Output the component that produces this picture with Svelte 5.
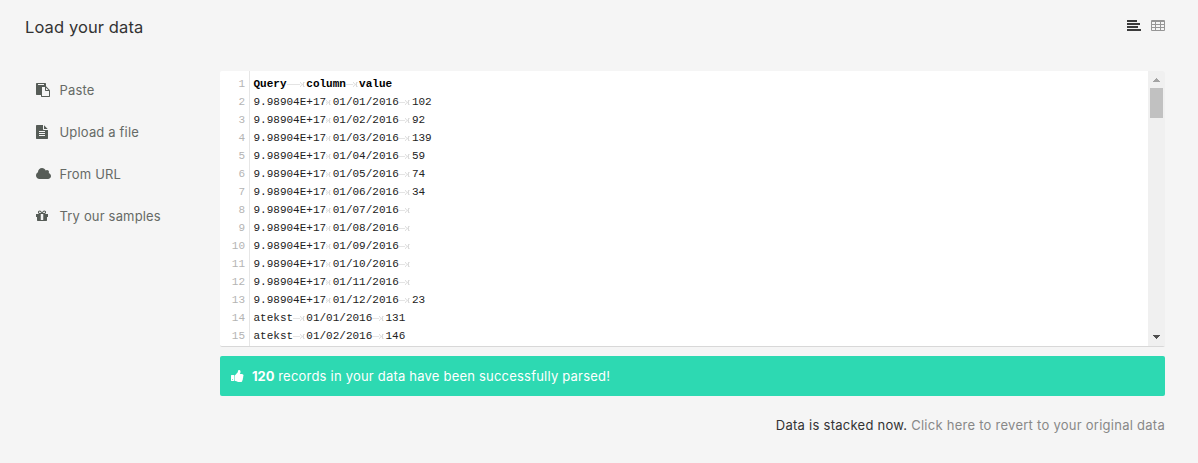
<script>
  const menu = [
    { label: 'Paste', icon: 'paste' },
    { label: 'Upload a file', icon: 'file' },
    { label: 'From URL', icon: 'cloud' },
    { label: 'Try our samples', icon: 'gift' }
  ];

  const source = [
    'Query\tcolumn\tvalue',
    '9.98904E+17\t01/01/2016\t102',
    '9.98904E+17\t01/02/2016\t92',
    '9.98904E+17\t01/03/2016\t139',
    '9.98904E+17\t01/04/2016\t59',
    '9.98904E+17\t01/05/2016\t74',
    '9.98904E+17\t01/06/2016\t34',
    '9.98904E+17\t01/07/2016\t',
    '9.98904E+17\t01/08/2016\t',
    '9.98904E+17\t01/09/2016\t',
    '9.98904E+17\t01/10/2016\t',
    '9.98904E+17\t01/11/2016\t',
    '9.98904E+17\t01/12/2016\t23',
    'atekst\t01/01/2016\t131',
    'atekst\t01/02/2016\t146'
  ];

  // Split a line into cells, each followed by the columns its tab spans.
  function cells(line) {
    let col = 0;
    const parts = line.split('\t');
    return parts.map((text, i) => {
      col += text.length;
      const tab = i < parts.length - 1 ? 4 - (col % 4) : 0;
      col += tab;
      return { text, tab };
    });
  }
  const lines = source.map(cells);
</script>

<main>
  <header>
    <h1>Load your data</h1>
    <div class="views">
      <svg width="14" height="11" viewBox="0 0 14 11" fill="#3b3b3b">
        <path d="M0 0h10v2H0zM0 3h13v2H0zM0 6h11v2H0zM0 9h14v2H0z" />
      </svg>
      <svg width="14" height="12" viewBox="0 0 14 12">
        <path fill="#969696" fill-rule="evenodd" d="M1 0h12q1 0 1 1v9q0 1-1 1H1q-1 0-1-1V1q0-1 1-1zM1 2v2h3V2zM5 2v2h4V2zM10 2v2h3V2zM1 5v2h3V5zM5 5v2h4V5zM10 5v2h3V5zM1 8v2h3V8zM5 8v2h4V8zM10 8v2h3V8z" />
      </svg>
    </div>
  </header>

  <div class="columns">
    <nav>
      {#each menu as item}
        <a class={item.icon}>
          {#if item.icon === 'paste'}
            <svg width="14" height="14" viewBox="0 0 1792 1792"><path d="M768 1664h896v-640h-416q-40 0-68-28t-28-68v-416h-384v1152zm256-1440v-64q0-13-9.500-22.500t-22.500-9.500h-704q-13 0-22.500 9.500t-9.500 22.500v64q0 13 9.500 22.500t22.500 9.500h704q13 0 22.500-9.500t9.500-22.500zm256 672h299l-299-299v299zm512 128v672q0 40-28 68t-68 28h-960q-40 0-68-28t-28-68v-160h-544q-40 0-68-28t-28-68v-1344q0-40 28-68t68-28h1088q40 0 68 28t28 68v328q21 13 36 28l408 408q28 28 48 76t20 88z" /></svg>
          {:else if item.icon === 'file'}
            <svg width="12" height="14" viewBox="128 0 1536 1792"><path d="M1596 476q14 14 28 36h-472v-472q22 14 36 28zm-476 164h544v1056q0 40-28 68t-68 28h-1344q-40 0-68-28t-28-68v-1600q0-40 28-68t68-28h800v544q0 40 28 68t68 28zm160 736v-64q0-14-9-23t-23-9h-704q-14 0-23 9t-9 23v64q0 14 9 23t23 9h704q14 0 23-9t9-23zm0-256v-64q0-14-9-23t-23-9h-704q-14 0-23 9t-9 23v64q0 14 9 23t23 9h704q14 0 23-9t9-23zm0-256v-64q0-14-9-23t-23-9h-704q-14 0-23 9t-9 23v64q0 14 9 23t23 9h704q14 0 23-9t9-23z" /></svg>
          {:else if item.icon === 'cloud'}
            <svg width="15" height="14" viewBox="64 0 1920 1792"><path d="M1984 1152q0 159-112.500 271.500t-271.500 112.500h-1088q-185 0-316.500-131.500t-131.500-316.500q0-132 71-241.500t187-163.500q-2-28-2-43 0-212 150-362t362-150q158 0 286.500 88t187.500 230q70-62 166-62 106 0 181 75t75 181q0 75-41 138 129 30 213 134.500t84 239.500z" /></svg>
          {:else}
            <svg width="12" height="14" viewBox="128 0 1536 1792"><path d="M1056 1356v-716h-320v716q0 25 18 38.500t46 13.500h192q28 0 46-13.500t18-38.500zm-456-844h195l-126-161q-26-31-69-31-40 0-68 28t-28 68 28 68 68 28zm688-96q0-40-28-68t-68-28q-43 0-69 31l-125 161h194q40 0 68-28t28-68zm376 256v320q0 14-9 23t-23 9h-96v416q0 40-28 68t-68 28h-1088q-40 0-68-28t-28-68v-416h-96q-14 0-23-9t-9-23v-320q0-14 9-23t23-9h440q-93 0-158.500-65.500t-65.500-158.500 65.500-158.500 158.500-65.500q107 0 168 77l128 165 128-165q61-77 168-77 93 0 158.500 65.500t65.500 158.500-65.500 158.500-158.500 65.500h440q14 0 23 9t9 23z" /></svg>
          {/if}
          <span>{item.label}</span>
        </a>
      {/each}
    </nav>

    <section>
      <div class="editor">
        <div class="gutter">
          {#each lines as _, i}<div>{i + 1}</div>{/each}
        </div>
        <div class="code">
          {#each lines as line, i}
            <div class="line" class:head={i === 0}>
              {#each line as cell}<span>{cell.text}</span>{#if cell.tab}<i class="tab" style="width: {cell.tab * 6.6}px"><svg width="5" height="5" viewBox="0 0 5 5"><path d="M0 0l2 2.500L0 5M4.500 0L2.500 2.500l2 2.500M3.500 0v5" /></svg></i>{/if}{/each}
            </div>
          {/each}
        </div>
        <div class="scroll">
          <svg width="7" height="4" viewBox="0 0 7 4" fill="#a3a3a3" shape-rendering="crispEdges"><path d="M3 0h1v1h1v1h1v1h1v1H0V3h1V2h1V1h1z" /></svg>
          <div class="thumb"></div>
          <svg class="down" width="7" height="4" viewBox="0 0 7 4" fill="#505050" shape-rendering="crispEdges"><path d="M0 0h7v1H6v1H5v1H4v1H3V3H2V2H1V1H0z" /></svg>
        </div>
      </div>

      <div class="success">
        <svg width="14" height="14" viewBox="64 0 1792 1792"><path d="M320 1344q0-26-19-45t-45-19q-27 0-45.500 19t-18.500 45q0 27 18.500 45.500t45.500 18.500q26 0 45-18.500t19-45.500zm160-512v640q0 26-19 45t-45 19h-288q-26 0-45-19t-19-45v-640q0-26 19-45t45-19h288q26 0 45 19t19 45zm1184 0q0 86-55 149 15 44 15 76 3 76-43 137 17 56 0 117-15 57-54 94 9 112-49 181-64 76-197 78h-129q-66 0-144-15.500t-121.500-29-120.500-39.500q-123-43-158-44-26-1-45-19.500t-19-44.500v-641q0-25 18-43.500t43-20.500q24-2 76-59t101-121q68-87 101-120 18-18 31-48t17.500-48.500 13.500-60.500q7-39 12.500-61t19.500-52 34-50q19-19 45-19 46 0 82.500 10.500t60 26 40 40.500 24 45 12 50 5 45 .5 39q0 38-9.500 76t-19 60-27.500 56q-3 6-10 18t-11 22-8 24h277q78 0 135 57t57 135z" /></svg>
        <span class="text"><b>120</b> <span class="msg">records in your data have been successfully parsed!</span></span>
      </div>

      <p><span class="now">Data is stacked now.</span> <a class="revert">Click here to revert to your original data</a></p>
    </section>
  </div>
</main>

<style>
  :global(body) { margin: 0; background: #f5f5f5; }
  main {
    box-sizing: border-box;
    height: 463px;
    padding: 0 33px 0 25px;
    overflow: hidden;
    background: #f5f5f5;
    font-family: Inter, sans-serif;
    font-size: 13px;
    color: #333;
  }
  header { display: flex; justify-content: space-between; height: 71px; }
  h1 { margin: 16px 0 0; font-size: 16.500px; line-height: 22px; font-weight: 400; letter-spacing: .1px; color: #333; }
  .views { display: flex; gap: 10.500px; padding-top: 20px; }
  .columns { display: flex; }
  nav { width: 184px; padding: 0 0 0 11px; flex: none; }
  nav a { display: flex; align-items: center; width: 148px; height: 42px; color: #666a66; letter-spacing: .17px; }
  nav a:first-child { margin-top: -2px; }
  nav svg { fill: #565c57; flex: none; margin-right: auto; }
  nav span { width: 124.500px; white-space: nowrap; }
  section { width: 945px; flex: none; }
  .editor {
    display: flex;
    height: 275px;
    overflow: hidden;
    background: #fff;
    border-bottom: 1px solid #d8d8d8;
    border-radius: 2px;
    font: 11px/18px "Liberation Mono", monospace;
    color: #222;
  }
  .gutter { width: 25px; padding: 4px 4px 0 0; border-right: 1px solid #e6e6e6; text-align: right; color: #b4b4b4; height: 290px; }
  .code { flex: 1; padding: 4px 0 0 3.500px; }
  .line { display: flex; height: 18px; white-space: pre; }
  .head { font-weight: 700; color: #000; }
  .tab { display: flex; align-items: center; justify-content: flex-end; height: 18px; padding-right: 1.500px; box-sizing: border-box; }
  .tab::before { content: ''; flex: 1; height: 1px; background: #e4e4e4; }
  .tab svg { fill: none; stroke: #d8d8d8; stroke-width: .9; flex: none; }
  .scroll { width: 17px; background: #f0f0f0; display: flex; flex-direction: column; align-items: center; padding-top: 7px; box-sizing: border-box; }
  .thumb { width: 13px; height: 30px; background: #c1c1c1; margin-top: 6px; }
  .down { margin-top: auto; margin-bottom: 7px; }
  .success { display: flex; align-items: center; box-sizing: border-box; height: 40px; margin-top: 9px; padding: 0 11px; background: #2dd9b2; border-radius: 2px; color: #fff; }
  .success svg { fill: #fff; margin-right: 7px; }
  .text { padding-bottom: 1px; }
  .success b { font-weight: 700; }
  .msg { letter-spacing: .21px; }
  p { margin: 20px 0 0; line-height: 18px; text-align: right; white-space: nowrap; letter-spacing: .26px; color: #333; }
  .revert { color: #888; }
</style>
